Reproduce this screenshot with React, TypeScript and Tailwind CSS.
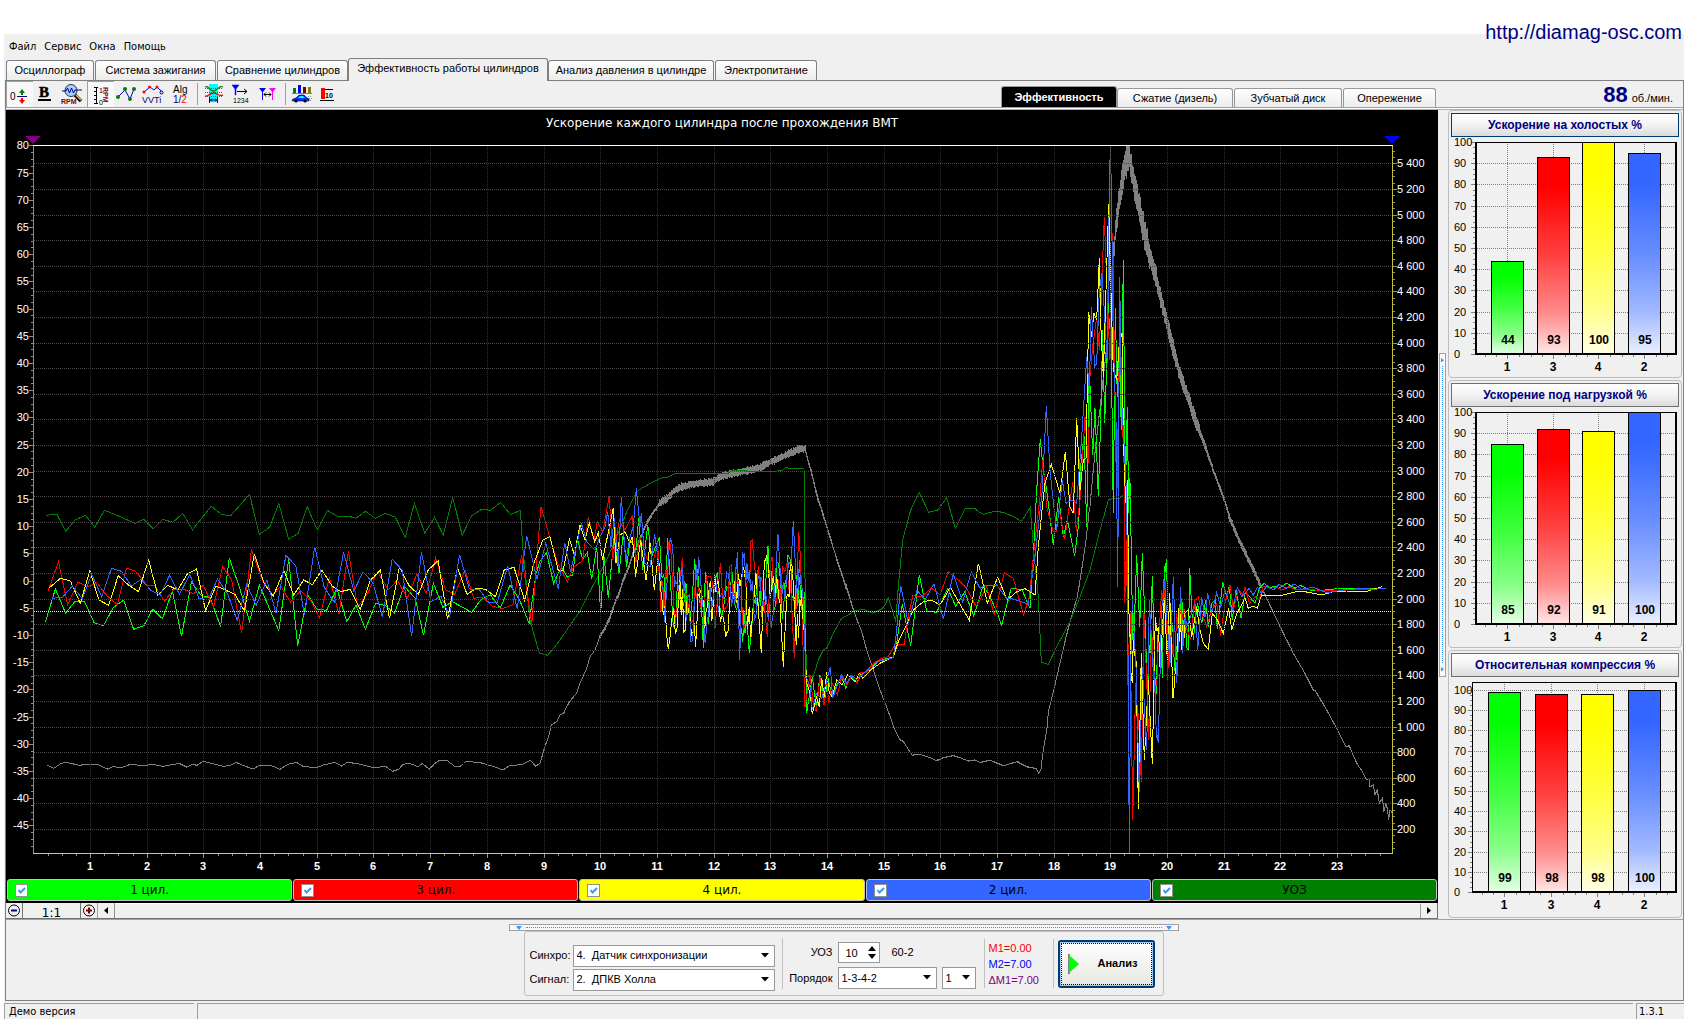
import React, { useState } from "react";

type Frame = [number, number, number, number];

/* Sampling frames: x origin, y origin, x scale, y scale */
const A: Frame = [0, 480, 2.529, 3];
const B: Frame = [580, 430, 3, 3];
const C: Frame = [980, 130, 3, 3];
const D: Frame = [980, 480, 3, 3];

type Part = [Frame, string];
type Pt = [number, number];

const toPoints = (parts: Part[]): Pt[] =>
  parts.flatMap(([f, s]) =>
    s
      .trim()
      .split(/\s+/)
      .map((p): Pt => {
        const [x, y] = p.split(",").map(Number);
        return [f[0] + x / f[2], f[1] + y / f[3]];
      })
  );

const random = (start: number) => {
  let seed = start;
  return () => {
    seed = (seed * 16807) % 2147483647;
    return seed / 2147483647;
  };
};

const isDense = (x: number) => (x > 655 && x < 802) || (x > 1128 && x < 1185);

/* A cylinder trace, with extra spikes where the engine runs fast */
const line = (parts: Part[], seed = 1) => {
  const pts = toPoints(parts);
  const next = random(seed * 7919);
  const out: Pt[] = [];
  pts.forEach(([x, y], i) => {
    out.push([x, y]);
    const after = pts[i + 1];
    if (after && seed > 1 && isDense(x) && Math.abs(after[1] - y) < 60) {
      const dx = after[0] - x;
      out.push([x + dx * 0.33, y * 0.6 + after[1] * 0.4 + (next() - 0.5) * 46]);
      out.push([x + dx * 0.66, y * 0.4 + after[1] * 0.6 + (next() - 0.5) * 46]);
    }
  });
  return out.map(([x, y]) => `${x.toFixed(1)},${y.toFixed(1)}`).join(" ");
};

/* A noisy trace: oscillates around the given centre line */
const noisy = (parts: Part[], amp: (t: number) => number) => {
  const pts = toPoints(parts);
  const next = random(7);
  const out: string[] = [];
  let sign = 1;
  for (let i = 0; i < pts.length - 1; i++) {
    const [x0, y0] = pts[i];
    const [x1, y1] = pts[i + 1];
    const n = Math.max(1, Math.ceil((x1 - x0) * 2));
    for (let k = 0; k < n; k++) {
      sign = -sign;
      const t = k / n;
      const x = x0 + (x1 - x0) * t;
      const y = y0 + (y1 - y0) * t + sign * amp(x) * (0.5 + 0.5 * next());
      out.push(`${x.toFixed(1)},${y.toFixed(1)}`);
    }
  }
  return out.join(" ");
};

const LIME: Part[] = [
  [A, "115,425 140,327 166,400 190,363 213,363 238,428 262,437 286,383 313,360 338,448 364,437 386,388 411,416 436,333 459,469 484,306 509,347 531,352 558,440 580,235 605,320 631,424 656,315 705,452 730,237 753,497 778,345 802,388 826,391 852,325 877,425 900,375 924,448 950,370 975,377 998,400 1022,318 1050,355 1071,466 1096,310 1120,382 1144,365 1193,397 1217,358 1240,344 1265,385 1290,315 1314,360 1338,430 1355,285 1365,245 1382,218 1400,310 1420,262 1435,292 1448,285 1460,172"],
  [B, "0,360 8,388 22,367 35,448 50,350 62,550 72,380 85,503 102,325 117,430 130,310 140,410 150,330 160,345 168,360 176,265 188,420 203,285 215,380 235,330 245,440 255,520 263,325 280,590 293,430 305,525 318,460 330,560 344,388 356,460 364,490 370,653 376,425 386,582 398,470 412,425 425,560 440,470 457,425 470,540 485,600 495,610 508,670 518,540 530,470 545,560 560,390 572,395 582,540 590,395 607,567 620,470 632,390 645,540 658,440 668,560 673,487 680,848 697,740 709,830 720,735 733,820 744,745 757,800 770,765 785,740 797,775 812,740 830,755 848,730 870,720 890,698 915,685 940,683 950,640 967,522 978,580 992,647 1003,560 1018,434 1040,543 1070,547 1103,475 1127,529 1154,485 1181,559"],
  [D, "10,315 30,350 50,395 65,436 93,326 125,328 150,385 160,230"],
  [C, "170,1080 181,928 190,1020 200,1080"],
  [D, "220,195 236,50 250,170 262,120 284,228 296,130"],
  [C, "303,1000 312,915 320,1190 328,715 338,975 345,835 355,1100 362,870 368,600 374,880 382,650 390,340 400,1150 406,535 412,800 418,640 424,900 430,390 434,900 437,1050 442,830 446,1150 451,1080"],
  [D, "455,300 460,520 470,225 479,440 487,220 495,420 502,620 510,520 517,288 527,670 535,440 547,593 553,258 562,330 568,520 575,420 583,560 593,480 603,370 612,420 625,510 629,265 640,480 652,370 665,430 677,360 685,440 695,370 705,360 712,448 728,306 740,350 748,318 757,420 768,330 783,415 795,340 810,350 825,370 838,325 853,310 870,325 880,318 895,325 920,310 945,325 960,316 990,330 1035,330 1070,326 1120,325 1190,327"],
];

const RED: Part[] = [
  [A, "122,332 148,245 171,374 197,307 222,320 245,308 270,347 297,374 320,265 343,274 372,316 392,318 416,363 440,328 465,328 490,341 514,316 540,382 563,259 586,300 611,460 636,208 661,295 690,345 710,318 735,367 760,332 785,360 808,415 833,292 857,403 881,214 905,382 930,340 955,275 982,330 1005,300 1030,355 1054,282 1078,340 1102,233 1127,330 1150,343 1176,270 1198,355 1220,352 1245,378 1270,386 1297,374 1319,226 1345,432 1368,80 1390,170 1410,250 1435,305 1450,262"],
  [B, "0,398 8,392 25,262 42,330 52,275 68,305 88,197 98,390 118,270 135,300 157,258 168,395 180,320 200,385 218,400 233,340 243,545 258,420 272,352 285,590 307,385 320,490 340,570 356,470 375,500 390,440 405,595 421,400 433,540 449,408 462,500 475,455 490,600 505,450 517,330 530,480 545,440 562,622 572,395 585,500 600,520 622,395 632,470 643,685 656,307 665,480 668,620 675,830 690,735 700,820 709,845 720,740 732,825 740,745 746,820 757,760 772,795 785,740 800,765 815,738 832,758 843,726 860,728 880,700 905,685 925,680 945,643 973,643 985,560 998,497 1025,500 1054,474 1080,495 1105,425 1135,450 1160,475 1188,529"],
  [D, "0,360 20,320 43,405 73,278 100,295 131,405 148,350 160,230"],
  [C, "180,1100 188,990 200,1130"],
  [D, "220,155 228,155 238,90 254,178 278,5 289,153 300,60"],
  [C, "315,860 325,1000 330,740 338,650 350,560 358,660 364,500 373,262 382,500 390,690 398,310 402,600 410,1130 420,550 428,900 434,1050"],
  [D, "434,370 440,180 443,615 450,400 458,1020 467,610 475,700 484,905 492,400 500,600 506,780 515,450 524,640 535,490 545,330 555,300 563,600 572,480 580,520 590,400 600,390 618,440 632,480 645,360 655,350 665,400 680,440 695,390 710,370 722,467 735,370 750,315 760,390 775,330 790,345 795,320 808,370 825,350 838,360 850,318 870,325 890,322 905,330 925,320 950,330 980,328 1030,332 1100,330 1190,328"],
];

const YELLOW: Part[] = [
  [A, "125,323 153,295 178,303 203,370 227,272 250,360 275,376 299,287 325,315 350,335 376,240 399,345 424,316 450,330 473,283 497,267 520,392 546,318 570,330 594,343 618,393 643,222 668,310 691,349 718,272 743,345 768,300 790,314 814,270 840,318 862,335 886,328 911,389 937,300 962,271 985,415 1010,262 1035,318 1058,343 1083,270 1108,242 1132,418 1157,262 1181,343 1205,325 1228,328 1253,350 1275,270 1300,262 1327,362 1350,250 1373,180 1391,170 1412,272 1424,272 1440,178 1453,225"],
  [B, "0,285 15,330 28,280 44,335 55,308 68,390 80,330 100,233 108,400 120,315 135,305 150,340 157,320 167,440 182,330 198,450 210,340 223,480 233,390 245,500 260,615 275,570 292,590 300,450 311,605 325,540 340,605 350,600 362,480 374,600 387,480 400,520 412,455 425,560 437,622 445,600 457,490 470,520 485,440 498,470 512,620 528,430 544,670 553,392 563,390 575,470 590,440 600,520 610,710 620,500 631,397 645,560 656,625 665,480 672,600 680,760 690,790 697,853 709,800 718,830 725,745 733,800 740,725 748,790 757,800 770,750 785,765 803,735 825,757 838,730 848,745 870,722 900,700 940,680 955,635 975,595 1000,540 1030,515 1055,511 1080,525 1111,472 1168,571 1195,401"],
  [D, "0,270 22,370 53,292 82,360 110,335 135,326 165,345 175,200 185,100"],
  [C, "195,1060 214,1003 240,1090 256,966 270,1130"],
  [D, "280,100"],
  [C, "290,865 300,1080 310,990 318,985 326,545 334,620 342,550 350,570 358,385 363,600 370,740 378,480 386,222 394,520 400,720 410,750 418,640 426,610 430,900 434,1050"],
  [D, "438,70 442,0 448,470 455,600 462,480 470,640 475,988 484,520 493,840 505,600 517,853 526,410 540,560 553,355 562,540 569,340 579,655 590,600 596,385 605,510 615,400 625,390 635,470 650,380 658,440 670,490 685,508 697,400 712,420 730,460 746,385 755,450 770,400 782,380 795,355 805,385 820,378 832,385 845,345 880,347 910,345 950,335 975,335 1025,345 1060,335 1100,333 1165,333 1205,320"],
];

const BLUE: Part[] = [
  [A, "132,355 158,352 183,318 208,356 232,283 257,350 282,265 307,274 332,318 357,298 382,332 405,345 429,286 454,343 480,283 503,355 529,353 550,297 575,340 600,422 624,313 648,376 675,300 698,400 723,226 748,257 770,405 796,200 820,322 845,367 869,217 895,334 918,275 943,308 967,411 992,238 1017,270 1041,469 1066,217 1090,365 1115,348 1137,410 1162,224 1187,327 1212,328 1236,367 1258,367 1284,257 1308,388 1332,167 1358,298 1380,190 1412,326 1428,188 1443,275"],
  [B, "0,300 5,283 20,335 45,360 60,320 75,290 83,245 93,350 103,265 115,410 124,200 137,395 150,320 160,290 169,175 180,290 184,250 195,400 210,410 224,313 240,430 254,575 267,360 280,380 290,460 307,410 318,560 325,500 335,635 345,500 356,382 368,520 376,640 390,470 405,470 420,500 435,480 450,465 465,520 472,365 479,690 488,367 497,470 508,420 523,572 540,440 555,480 570,520 580,550 594,313 605,500 620,440 640,274 650,490 658,390 668,480 678,740 690,770 697,840 709,790 725,805 740,755 751,710 758,805 770,770 785,735 800,760 815,736 830,748 845,735 860,722 890,695 940,683 950,600 962,467 985,580 1011,480 1035,510 1062,461 1090,568 1120,431 1148,515 1174,425"],
  [D, "0,325 15,316 50,315 80,355 100,357 145,373 165,230"],
  [C, "187,1080 199,828 210,1020 218,1100"],
  [D, "230,150"],
  [C, "247,1050 258,1120 275,1110 290,1120 305,920 320,680 328,780 334,532 344,710 350,700 358,480 366,430 374,560 382,700 388,190 391,48 394,166 400,640 408,870 413,1370 419,440 424,800 430,900"],
  [D, "440,50 445,630 448,1118 452,560 457,360 468,560 478,937 487,560 500,810 508,360 518,560 527,710 535,790 545,380 555,330 570,550 580,290 590,610 602,322 608,520 620,440 635,400 645,370 653,510 665,350 675,410 683,340 695,400 710,338 722,380 735,330 748,370 757,390 772,322 785,350 795,340 807,325 820,345 832,322 845,340 860,318 880,330 898,313 920,325 943,312 965,328 1000,322 1040,338 1090,330 1150,325 1180,328 1217,325"],
];

const ADVANCE: Part[] = [
  [A, "116,106 144,103 166,154 190,120 216,106 240,142 264,91 290,103 315,116 342,130 364,118 388,146 412,118 437,127 462,100 487,149 534,79 560,103 583,108 631,43 656,163 682,142 705,70 730,178 754,160 777,80 803,151 828,91 852,108 880,108 900,115 924,94 950,115 975,100 1000,112 1025,172 1048,70 1074,160 1099,112 1121,166 1145,52 1169,166 1193,107 1218,88 1241,91 1266,67 1291,104 1316,91 1322,200 1340,420 1364,519 1385,526 1400,505 1425,465 1445,430"],
  [B, "0,543 40,465 80,390 110,320 140,245 170,185 190,172 215,158 240,145 265,141 285,130 445,130 455,121 520,124 585,124 608,121 615,113 630,115 672,116 674,275 676,600 680,740 700,740 715,690 730,660 740,655 760,610 785,565 805,555 820,543 850,538 878,550 905,537 915,525 925,503 940,550 947,575 955,470 968,330 992,240 1018,188 1046,247 1073,240 1100,203 1126,295 1155,236 1185,236"],
  [D, "0,98 12,103 42,94 70,97 100,110 125,124 151,82 160,200 175,350 184,547 205,553 230,500 270,425 300,350 330,270 355,170 385,60 400,55 420,55 430,45"],
];

const SPEED: Part[] = [
  [A, "120,855 136,865 155,850 168,847 200,856 218,853 248,854 272,867 286,859 304,864 330,853 362,857 385,853 413,859 453,850 472,861 488,853 498,856 514,844 535,850 565,859 582,856 597,847 612,855 640,867 655,857 670,857 685,856 708,868 728,853 750,847 765,858 797,864 818,855 846,847 864,858 878,847 905,851 945,863 975,859 993,874 1008,868 1020,853 1035,850 1057,860 1068,850 1086,868 1100,850 1112,841 1130,841 1150,859 1165,858 1178,844 1215,848 1250,860 1272,870 1288,858 1320,853 1342,841 1355,859 1366,849 1378,800 1390,760 1394,735 1408,725 1416,705 1425,700 1440,665 1458,640"],
  [B, "0,760 20,715 30,680 45,660 60,620 75,595 90,565 105,520 120,485 130,450 145,415 160,370 175,340 195,290 210,260 230,235 240,220 260,205 280,185 300,172 350,160 400,155 420,140 450,133 500,122 540,112 580,93 620,73 650,60 675,55 680,75 690,110 700,150 712,200 725,240 740,290 760,355 780,415 800,475 820,540 845,605 860,660 880,720 900,780 925,845 945,900 958,927 970,935 996,975 1020,973 1050,983 1070,992 1090,983 1120,977 1140,983 1165,993 1185,990"],
  [D, "0,848 30,841 70,857 112,845 140,860 168,865 176,881 184,865 187,830 202,740 205,695 220,635 240,550 255,485 270,425 292,350 305,270 318,180 330,70"],
  [C, "345,960 360,830 375,690 390,560 400,380 410,270 420,200 430,130 440,90 446,72 452,100 465,170 480,240 500,340 525,430 560,580 600,730 650,880 700,1020 740,1130"],
  [D, "750,115 780,185 830,290 860,355 900,440 940,520 975,580 1000,630 1006,632 1040,690 1075,755 1097,800 1108,798 1130,850 1150,880 1160,900 1167,895 1170,920 1180,915 1185,945 1192,930 1198,968 1208,955 1211,998 1217,970 1222,985 1226,1020 1230,990 1237,1000"],
];

const speedNoise = (x: number) => {
  if (x < 600) return 0;
  if (x < 660) return 2.5;
  if (x < 807) return 4.5;
  if (x < 860) return 2;
  if (x < 1090) return 0.2;
  if (x < 1112) return 4;
  if (x < 1150) return 17;
  if (x < 1175) return 12;
  if (x < 1200) return 8;
  if (x < 1260) return 4;
  return 0.3;
};

const range = (a: number, b: number, step = 1) => {
  const r: number[] = [];
  for (let v = a; v <= b; v += step) r.push(v);
  return r;
};

const X = (u: number) => Math.round(33.4 + 56.68 * u);
const YL = (v: number) => Math.round(145.3 + (80 - v) * 5.44);
const YR = (v: number) => Math.round(854.6 - (v / 200) * 25.6);

const rpmLabel = (v: number) => (v >= 1000 ? `${Math.floor(v / 1000)} ${String(v % 1000).padStart(3, "0")}` : `${v}`);

function MainPlot() {
  return (
    <svg viewBox="6 110 1432 768" className="block w-full" role="img" aria-label="Ускорение каждого цилиндра после прохождения ВМТ">
      <text x="722" y="127" textAnchor="middle" fill="#fff" fontSize="12" fontFamily="'DejaVu Sans', sans-serif">
        Ускорение каждого цилиндра после прохождения ВМТ
      </text>
      <defs>
        <clipPath id="plotArea">
          <rect x="33" y="145" width="1360" height="709" />
        </clipPath>
      </defs>
      <g fill="none" shapeRendering="crispEdges" strokeWidth="1">
        <g clipPath="url(#plotArea)">
          <polyline points={noisy(SPEED, speedNoise)} stroke="#808080" />
          <polyline points={line(ADVANCE)} stroke="#008000" />
          <polyline points={line(LIME, 2)} stroke="#00ff00" />
          <polyline points={line(RED, 3)} stroke="#ff0000" />
          <polyline points={line(YELLOW, 4)} stroke="#ffff00" />
          <polyline points={line(BLUE, 5)} stroke="#3366ff" />
        </g>
        {range(200, 5400, 200).map((v) => (
          <line key={v} x1="34" x2="1392" y1={YR(v) + 0.5} y2={YR(v) + 0.5} stroke="#484848" strokeDasharray="1 1" />
        ))}
        {range(1, 23).map((v) => (
          <line key={v} x1={X(v) + 0.5} x2={X(v) + 0.5} y1="146" y2="853" stroke="#303030" strokeDasharray="1 1" />
        ))}
        <line x1="34" x2="1392" y1="611.5" y2="611.5" stroke="#a8ffff" strokeDasharray="1 1" />
        <line x1="33" x2="1393" y1="145.5" y2="145.5" stroke="#ffffff" />
        <line x1="33" x2="1393" y1="853.5" y2="853.5" stroke="#c0c0c0" />
        <line x1="33.5" x2="33.5" y1="146" y2="853" stroke="#40c040" />
        <line x1="1392.5" x2="1392.5" y1="146" y2="853" stroke="#c0c040" />
        <g stroke="#909090">
          {range(-45, 80, 5).map((v) => (
            <line key={v} x1="29" x2="33" y1={YL(v) + 0.5} y2={YL(v) + 0.5} />
          ))}
          {range(-48.75, 78.75, 1.25).map((v) => (
            <line key={v} x1="31" x2="33" y1={YL(v) + 0.5} y2={YL(v) + 0.5} />
          ))}
          {range(200, 5400, 200).map((v) => (
            <line key={v} x1="1393" x2="1397" y1={YR(v) + 0.5} y2={YR(v) + 0.5} />
          ))}
          {range(50, 5500, 50).map((v) => (
            <line key={v} x1="1393" x2="1395" y1={YR(v) + 0.5} y2={YR(v) + 0.5} />
          ))}
          {range(1, 23).map((v) => (
            <line key={v} x1={X(v) + 0.5} x2={X(v) + 0.5} y1="854" y2="858" />
          ))}
          {range(0.25, 23.75, 0.25).map((v) => (
            <line key={v} x1={X(v) + 0.5} x2={X(v) + 0.5} y1="854" y2="856" />
          ))}
        </g>
      </g>
      <path d="M25 136h16l-8 8z" fill="#800080" />
      <path d="M1384 136h16l-8 8z" fill="#0000ff" />
      <g fill="#fff" fontSize="11" fontFamily="'Liberation Sans', sans-serif">
        {range(-45, 80, 5).map((v) => (
          <text key={v} x="29" y={YL(v) + 4} textAnchor="end">
            {v}
          </text>
        ))}
        {range(200, 5400, 200).map((v) => (
          <text key={v} x="1397" y={YR(v) + 4}>
            {rpmLabel(v)}
          </text>
        ))}
        {range(1, 23).map((v) => (
          <text key={v} x={X(v)} y="870" textAnchor="middle" fontWeight="bold">
            {v}
          </text>
        ))}
      </g>
    </svg>
  );
}

interface BarSpec {
  label: string;
  value: number;
}

const BAR_COLORS = ["#00ff00", "#ff0000", "#ffff00", "#3366ff"];

function BarPanel({ title, bars, headroom, focused }: { title: string; bars: BarSpec[]; headroom?: boolean; focused?: boolean }) {
  const left = headroom ? 21 : 24;
  const bottom = headroom ? 216 : 218;
  const top = 6;
  const full = headroom ? 14 : 6;
  const scale = (bottom - full) / 100;
  const y = (v: number) => Math.round(bottom - v * scale);
  const xs = headroom ? [37, 84, 130, 177] : [40, 86, 131, 177];
  const id = title.replace(/[^а-яА-Я]/g, "");
  return (
    <section className="rounded-sm border border-[#bdbdbd] px-0.5 pt-0.5">
      <button
        type="button"
        className={
          "block h-6 w-full border bg-linear-to-b from-white via-[#f2f2f2] to-[#dcdcdc] font-['Liberation_Sans',sans-serif] text-xs leading-none font-bold text-[#000080] " +
          (focused ? "border-[#003c74]" : "border-[#707070]")
        }
      >
        {title}
      </button>
      <svg viewBox="0 1 228 240" className="block w-full" role="img" aria-label={title}>
        <defs>
          {BAR_COLORS.map((c, i) => (
            <linearGradient key={c} id={`${id}${i}`} x1="0" y1="0" x2="0" y2="1">
              <stop offset="0" stopColor={c} />
              <stop offset="0.15" stopColor={c} />
              <stop offset="0.5" stopColor={c} stopOpacity="0.75" />
              <stop offset="0.8" stopColor={c} stopOpacity="0.45" />
              <stop offset="1" stopColor={c} stopOpacity="0.1" />
            </linearGradient>
          ))}
        </defs>
        <g shapeRendering="crispEdges" fill="none">
          {range(10, headroom ? 100 : 90, 10).map((v) => (
            <line key={v} x1={left} x2="225" y1={y(v) + 0.5} y2={y(v) + 0.5} stroke="#808080" strokeDasharray="1 1" />
          ))}
          {range(0, 100, 10).map((v) => (
            <line key={v} x1={left - 4} x2={left} y1={y(v) + 0.5} y2={y(v) + 0.5} stroke="#808080" />
          ))}
          {range(2.5, 97.5, 2.5).map((v) => (
            <line key={v} x1={left - 2} x2={left} y1={y(v) + 0.5} y2={y(v) + 0.5} stroke="#808080" />
          ))}
          {xs.map((x, i) => (
            <g key={x} stroke="#808080">
              <line x1={x + 16.5} x2={x + 16.5} y1={top} y2={bottom} strokeDasharray="1 1" />
              <line x1={x + 16.5} x2={x + 16.5} y1={bottom} y2={bottom + 5} />
              <line x1={x + 5.5} x2={x + 5.5} y1={bottom} y2={bottom + 3} />
              <line x1={x + 28.5} x2={x + 28.5} y1={bottom} y2={bottom + 3} />
              <line x1={x - 5.5} x2={x - 5.5} y1={bottom} y2={bottom + 3} />
              {i === 3 && <line x1={x + 39.5} x2={x + 39.5} y1={bottom} y2={bottom + 3} />}
            </g>
          ))}
          <line x1={left} x2="226" y1={top + 0.5} y2={top + 0.5} stroke="#000" />
          <line x1="225" x2="225" y1={top} y2={bottom + 1} stroke="#000" strokeWidth="2" />
          <line x1={left} x2="226" y1={bottom} y2={bottom} stroke="#000" strokeWidth="2" />
          <line x1={left + 0.5} x2={left + 0.5} y1={top} y2={bottom + 1} stroke="#000" strokeWidth={headroom ? 1 : 2} />
          {bars.map((b, i) => (
            <g key={b.label}>
              <rect x={xs[i]} y={y(b.value)} width="33" height={bottom - y(b.value)} fill="#fff" />
              <rect
                x={xs[i] + 0.5}
                y={y(b.value) + 0.5}
                width="32"
                height={bottom - y(b.value) - 1}
                fill={`url(#${id}${i})`}
                stroke="#000"
              />
            </g>
          ))}
        </g>
        <g fontFamily="'Liberation Sans', sans-serif" fill="#000">
          {range(0, 100, 10).map((v) => (
            <text key={v} x="3" y={y(v) + 4} fontSize="11">
              {v}
            </text>
          ))}
          {bars.map((b, i) => (
            <g key={b.label} fontSize="12" fontWeight="bold" textAnchor="middle">
              <text x={xs[i] + 17} y={bottom - 10}>
                {b.value}
              </text>
              <text x={xs[i] + 16} y={bottom + 17}>
                {b.label}
              </text>
            </g>
          ))}
        </g>
      </svg>
    </section>
  );
}

function ToolButton({ label, pressed, children }: { label: string; pressed?: boolean; children: React.ReactNode }) {
  return (
    <button
      type="button"
      aria-label={label}
      aria-pressed={pressed}
      className={"flex h-[26px] w-[27px] items-center justify-start pl-px " + (pressed ? "border-t border-l border-[#a0a0a0] bg-[#f8f8f8]" : "")}
    >
      <svg viewBox="0 0 22 22" className="size-[22px] shrink-0" fontFamily="'Liberation Sans', sans-serif">
        {children}
      </svg>
    </button>
  );
}

function Separator() {
  return <span className="mr-1 ml-0.5 h-[22px] w-px bg-[#a0a0a0]" />;
}

function Toolbar() {
  return (
    <div className="flex items-center" role="toolbar" aria-label="Инструменты">
      <ToolButton label="Нулевая линия" pressed>
        <text x="2" y="16" fontSize="10">0</text>
        <path d="M9 12.5h10" stroke="#000080" shapeRendering="crispEdges" />
        <path d="M14 5l3 4h-2v2h-2V9h-2z" fill="#008000" />
        <path d="M14 20l3-4h-2v-2h-2v2h-2z" fill="#ff0000" />
      </ToolButton>
      <ToolButton label="Жирные линии">
        <text x="10" y="14" fontSize="15" fontWeight="bold" textAnchor="middle" fontFamily="'Liberation Serif', serif" stroke="#000" strokeWidth="0.5">B</text>
        <path d="M4 17h13" stroke="#000" strokeWidth="2" shapeRendering="crispEdges" />
      </ToolButton>
      <ToolButton label="Поиск по оборотам">
        <path d="M14 12l6 6" stroke="#000" strokeWidth="3.4" />
        <path d="M15 12l5 5" stroke="#f0b050" strokeWidth="1.6" />
        <circle cx="10" cy="7.500" r="6" fill="#a8d0ff" stroke="#203050" />
        <path d="M1 8h4l1.500-3 2 5 2-5 2 5 1.500-3h7" stroke="#000090" fill="none" />
        <text x="0" y="21" fontSize="7" fontWeight="bold" fill="#800000">RPM</text>
      </ToolButton>
      <ToolButton label="Шкала оборотов" pressed>
        <path d="M7.500 3v17M5 3.500h4M5 19.500h4M5 7.500h3M5 11.500h3M5 15.500h3" stroke="#000" fill="none" shapeRendering="crispEdges" />
        <text x="10" y="9" fontSize="7">1</text>
        <text x="10" y="21" fontSize="7">0</text>
        <text transform="translate(14 3) rotate(90)" fontSize="7" fontWeight="bold" fill="#800000">RPM</text>
      </ToolButton>
      <ToolButton label="Точки">
        <path d="M3 14L10 7l5 9 4-10" stroke="#0000d0" fill="none" />
        <g fill="#008000">
          <circle cx="3" cy="14" r="2" />
          <circle cx="10" cy="6" r="2" />
          <circle cx="15" cy="16" r="2" />
          <circle cx="19" cy="6" r="2" />
        </g>
      </ToolButton>
      <ToolButton label="VVTi">
        <path d="M2 9l6-5 4 3 3-3 4 4" stroke="#0000ff" fill="none" />
        <g fill="#ff0000">
          <circle cx="2" cy="9" r="1.500" />
          <circle cx="7.500" cy="4" r="1.500" />
          <circle cx="15" cy="4" r="1.500" />
        </g>
        <circle cx="19.500" cy="9.500" r="1.500" fill="none" stroke="#000" />
        <text x="0" y="20" fontSize="9" fill="#000080">VVTi</text>
      </ToolButton>
      <ToolButton label="Алгоритм 1/2">
        <text x="4" y="10" fontSize="10">Alg</text>
        <text x="4" y="20" fontSize="10" fill="#000080">1/<tspan fill="#ff0000">2</tspan></text>
      </ToolButton>
      <Separator />
      <ToolButton label="Интервал">
        <rect x="6" y="1" width="9" height="18" fill="#00ffff" />
        <path d="M2 5.500h18M2 13.500h18M2 9.500h18" stroke="#555" strokeDasharray="1 1" shapeRendering="crispEdges" />
        <path d="M2 4c4-2 4 4 8.500 4S15 2 20 4" stroke="#008000" fill="none" strokeWidth="1.300" />
        <path d="M2 13c4 1 4-3 8.500-3s5 4 9.500 2" stroke="#e00000" fill="none" strokeWidth="1.300" />
        <path d="M6.500 14v6M14.500 14v6M7 17h7M9 15.500L7.500 17 9 18.500M12 15.500l1.500 1.500-1.500 1.500" stroke="#000080" fill="none" />
      </ToolButton>
      <ToolButton label="Нумерация">
        <path d="M2 2h7L6 6v6H5V6z" fill="#0000ff" stroke="#0000ff" strokeWidth="0.500" />
        <path d="M7 8.500h10M14 6l3 2.500-3 2.500" stroke="#000" fill="none" />
        <text x="3" y="20" fontSize="7">1234</text>
      </ToolButton>
      <ToolButton label="Между маркерами">
        <path d="M2 5h7L6 9v8H5V9z" fill="#0000ff" />
        <path d="M12 5h7l-3 4v8h-1V9z" fill="#ff00ff" />
        <path d="M7 11.500h7M9 9.500l-2 2 2 2M12 9.500l2 2-2 2" stroke="#000" fill="none" />
      </ToolButton>
      <Separator />
      <ToolButton label="Отчёт по автомобилю">
        <g shapeRendering="crispEdges">
          <rect x="2" y="5" width="3" height="5" fill="#008000" />
          <rect x="7" y="2" width="3" height="8" fill="#0000ff" />
          <rect x="12" y="4" width="3" height="6" fill="#800000" />
          <rect x="17" y="4" width="3" height="6" fill="#808000" />
          <path d="M1 10.500h20" stroke="#808080" />
          <path d="M17 13.500h4M16 15.500h5M17 17.500h4" stroke="#909090" strokeDasharray="1 1" />
        </g>
        <path d="M2 16l3-1 3-3h5l3 3 2 1v2H1z" fill="#0030ff" stroke="#000040" strokeWidth="0.600" />
        <path d="M7 15l2-2h3l2 2z" fill="#00ffff" />
        <circle cx="5" cy="18" r="1.600" />
        <circle cx="14" cy="18" r="1.600" />
      </ToolButton>
      <ToolButton label="Столбцы">
        <rect x="3" y="5" width="4" height="11" fill="#ff0000" />
        <path d="M7 6.500h8M2 17.500h14" stroke="#000" shapeRendering="crispEdges" />
        <text x="7" y="15" fontSize="7" fontWeight="bold">10</text>
      </ToolButton>
    </div>
  );
}

const MAIN_TABS = [
  { label: "Осциллограф", cls: "w-[88px]" },
  { label: "Система зажигания", cls: "ml-px w-[121px]" },
  { label: "Сравнение цилиндров", cls: "ml-px w-[131px]" },
  { label: "Эффективность работы цилиндров", cls: "w-[200px]" },
  { label: "Анализ давления в цилиндре", cls: "w-[166px]" },
  { label: "Электропитание", cls: "ml-px w-[102px]" },
];

const VIEW_TABS = [
  { label: "Эффективность", cls: "w-[116px]" },
  { label: "Сжатие (дизель)", cls: "w-[116px]" },
  { label: "Зубчатый диск", cls: "ml-px w-[108px]" },
  { label: "Опережение", cls: "ml-px w-[93px]" },
];

const LEGEND = [
  { label: "1 цил.", cls: "bg-[#00ff00]" },
  { label: "3 цил.", cls: "bg-[#ff0000]" },
  { label: "4 цил.", cls: "bg-[#ffff00]" },
  { label: "2 цил.", cls: "bg-[#3366ff]" },
  { label: "УОЗ", cls: "bg-[#008000]" },
];

function DropDown({ id, value, cls, label }: { id: string; value: string; cls: string; label?: string }) {
  return (
    <div className={"relative h-[22px] " + cls}>
      <select id={id} aria-label={label} defaultValue={value} className="size-full appearance-none border border-[#989898] bg-white pl-[3px] text-[11px] leading-none">
        <option>{value}</option>
      </select>
      <svg viewBox="0 0 8 5" className="pointer-events-none absolute top-2 right-1.5 w-2">
        <path d="M0 0h8L4 4.500z" />
      </svg>
    </div>
  );
}

export default function App() {
  const [tab, setTab] = useState(3);
  const [view, setView] = useState(0);
  const [on, setOn] = useState([true, true, true, true, true]);
  return (
    <div className="relative bg-white pt-[34px] pr-3 pb-[5px] pl-1 font-['Liberation_Sans',sans-serif] text-[11px] leading-none text-black">
      <a href="http://diamag-osc.com" className="absolute top-[22px] right-3.5 text-xl leading-5 text-[#000080]">
        http://diamag-osc.com
      </a>
      <div className="bg-[#f0f0f0]">
        <nav className="flex h-6 items-center gap-2 pl-[5px] font-['DejaVu_Sans_Condensed','DejaVu_Sans',sans-serif] text-[11px]" aria-label="Меню">
          {["Файл", "Сервис", "Окна", "Помощь"].map((m) => (
            <button key={m} type="button">
              {m}
            </button>
          ))}
        </nav>
        <div className="flex h-[22px] items-end pl-0.5" role="tablist">
          {MAIN_TABS.map((t, i) => (
            <button
              key={t.label}
              type="button"
              role="tab"
              aria-selected={i === tab}
              onClick={() => setTab(i)}
              className={
                "rounded-t-[3px] border border-b-0 border-[#808080] whitespace-nowrap " +
                t.cls +
                (i === tab ? " relative -mb-px h-[23px] bg-[#f0f0f0] pb-1" : " h-5 bg-linear-to-b from-white to-[#ececec]")
              }
            >
              {t.label}
            </button>
          ))}
        </div>
        <div className="ml-px border border-[#808080]">
          <div className="flex h-[26px] justify-between">
            <Toolbar />
            <div className="flex">
              <div className="flex items-end" role="tablist">
                {VIEW_TABS.map((t, i) => (
                  <button
                    key={t.label}
                    type="button"
                    role="tab"
                    aria-selected={i === view}
                    onClick={() => setView(i)}
                    className={
                      "rounded-t-[3px] border border-b-0 border-[#989898] whitespace-nowrap " +
                      t.cls +
                      (i === view ? " h-[21px] bg-black font-bold text-white" : " h-[19px] bg-linear-to-b from-white to-[#ececec]")
                    }
                  >
                    {t.label}
                  </button>
                ))}
              </div>
              <p className="flex w-[247px] items-baseline justify-end gap-1 pt-1 pr-2.5">
                <span className="text-[22px] leading-5 font-bold text-[#000080]">88</span>
                <span>об./мин.</span>
              </p>
            </div>
          </div>
          <div className="h-[3px] border-t border-b border-t-[#a0a0a0] border-b-[#b0b0b0] bg-white" />

          <div className="flex items-start">
            <main className="min-w-0 flex-1">
              <div className="bg-black">
                <MainPlot />
                <div className="grid grid-cols-5 gap-px px-px pt-px pb-0.5 font-['DejaVu_Sans',sans-serif] text-xs">
                  {LEGEND.map((l, i) => (
                    <label key={l.label} className={"relative flex h-[22px] items-center justify-center rounded-[3px] border border-[#c0c0c0] " + l.cls}>
                      <input
                        type="checkbox"
                        checked={on[i]}
                        onChange={() => setOn(on.map((v, k) => (k === i ? !v : v)))}
                        className="peer absolute left-[7px] size-[13px] appearance-none border border-[#909090] bg-white"
                      />
                      <svg viewBox="0 0 13 13" className="pointer-events-none absolute left-[7px] hidden size-[13px] peer-checked:block">
                        <path d="M3.500 6l2 2.500 4.500-4.500" fill="none" stroke="#3399ff" strokeWidth="2" />
                      </svg>
                      {l.label}
                    </label>
                  ))}
                </div>
              </div>
              <div className="flex h-4 border-b border-[#707070]">
                <button type="button" aria-label="Уменьшить" className="w-[17px] border-r border-[#707070]">
                  <svg viewBox="0 0 16 15" className="w-4">
                    <circle cx="8" cy="7.500" r="5.500" fill="none" stroke="#000" />
                    <path d="M5 7.500h6" stroke="#000080" strokeWidth="2" />
                  </svg>
                </button>
                <span className="w-[58px] border-r border-[#707070] pt-1 text-center font-['DejaVu_Sans',sans-serif] text-xs leading-none">1:1</span>
                <button type="button" aria-label="Увеличить" className="w-[17px] border-r border-[#a0a0a0]">
                  <svg viewBox="0 0 16 15" className="w-4">
                    <circle cx="8" cy="7.500" r="5.500" fill="none" stroke="#000" />
                    <path d="M5 7.500h6M8 4.500v6" stroke="#800000" strokeWidth="2" />
                  </svg>
                </button>
                <button type="button" aria-label="Влево" className="flex w-[17px] items-center justify-center border-r border-[#909090]">
                  <svg viewBox="0 0 4 7" className="h-[7px] w-1">
                    <path d="M4 0v7L0 3.500z" />
                  </svg>
                </button>
                <div className="flex-1 border-t border-r border-[#a0a0a0] border-t-white" />
                <button type="button" aria-label="Вправо" className="flex w-[17px] items-center justify-center border-r border-[#707070]">
                  <svg viewBox="0 0 4 7" className="h-[7px] w-1">
                    <path d="M0 0v7l4-3.500z" />
                  </svg>
                </button>
              </div>
            </main>
            <div className="flex w-2.5 justify-start self-stretch pl-px">
              <button type="button" aria-label="Свернуть панель" className="flex h-[324px] w-[7px] flex-col items-center justify-between self-center border border-[#a0a0a0] bg-[#f8f8f8] py-1">
                <svg viewBox="0 0 4 6" className="w-[3px]"><path d="M0 0v6l4-3z" fill="#3399ff" /></svg>
                <span className="my-1 flex-1 border-l border-dotted border-[#3399ff]" />
                <svg viewBox="0 0 4 6" className="w-[3px]"><path d="M0 0v6l4-3z" fill="#3399ff" /></svg>
              </button>
            </div>
            <aside className="flex w-[235px] flex-col gap-0.5 pr-px">
              <BarPanel
                focused
                title="Ускорение на холостых %"
                bars={[
                  { label: "1", value: 44 },
                  { label: "3", value: 93 },
                  { label: "4", value: 100 },
                  { label: "2", value: 95 },
                ]}
              />
              <BarPanel
                title="Ускорение под нагрузкой %"
                bars={[
                  { label: "1", value: 85 },
                  { label: "3", value: 92 },
                  { label: "4", value: 91 },
                  { label: "2", value: 100 },
                ]}
              />
              <BarPanel
                headroom
                title="Относительная компрессия %"
                bars={[
                  { label: "1", value: 99 },
                  { label: "3", value: 98 },
                  { label: "4", value: 98 },
                  { label: "2", value: 100 },
                ]}
              />
            </aside>
          </div>
          <div className="h-px bg-[#a0a0a0]" />
          <div className="flex flex-col items-center pt-1 pr-0.5 pb-1">
            <button type="button" aria-label="Свернуть настройки" className="flex h-[7px] w-[670px] items-center justify-between border border-[#a0a0a0] bg-[#f8f8f8] px-1.5">
              <svg viewBox="0 0 6 4" className="w-1.5"><path d="M0 0h6L3 4z" fill="#3399ff" /></svg>
              <span className="mx-1 flex-1 border-t border-dotted border-[#3399ff]" />
              <svg viewBox="0 0 6 4" className="w-1.5"><path d="M0 0h6L3 4z" fill="#3399ff" /></svg>
            </button>
            <form className="flex h-[65px] w-[640px] items-center rounded-[3px] border border-[#c0c0c0]" onSubmit={(e) => e.preventDefault()}>
              <div className="grid w-[257px] grid-cols-[42px_203px] items-center gap-x-px gap-y-0.5 pt-2 pl-[5px]">
                <label htmlFor="sync">Синхро:</label>
                <DropDown id="sync" value={"4.\u00a0 Датчик синхронизации"} cls="w-[202px]" />
                <label htmlFor="signal">Сигнал:</label>
                <DropDown id="signal" value={"2.\u00a0 ДПКВ Холла"} cls="w-[202px]" />
              </div>
              <div className="h-[51px] w-px bg-[#c0c0c0]" />
              <div className="grid w-[201px] grid-cols-[50px_99px_34px] items-center gap-x-[5px] gap-y-1 pt-1">
                <label htmlFor="angle" className="text-right">УОЗ</label>
                <div className="flex items-center gap-3">
                  <div className="relative h-[21px] w-[42px]">
                    <input id="angle" defaultValue="10" className="size-full border border-[#989898] bg-white pl-[7px] text-[11px]" />
                    <button type="button" aria-label="Больше" className="absolute top-1 right-1 w-2">
                      <svg viewBox="0 0 8 5" className="w-2"><path d="M0 5h8L4 0z" /></svg>
                    </button>
                    <button type="button" aria-label="Меньше" className="absolute right-1 bottom-1 w-2">
                      <svg viewBox="0 0 8 5" className="w-2"><path d="M0 0h8L4 5z" /></svg>
                    </button>
                  </div>
                  <span>60-2</span>
                </div>
                <span />
                <label htmlFor="order" className="text-right">Порядок</label>
                <DropDown id="order" value="1-3-4-2" cls="w-[99px]" />
                <DropDown id="first" value="1" cls="w-[34px]" label="Первый цилиндр" />
              </div>
              <div className="h-[49px] w-px bg-[#c0c0c0]" />
              <div className="flex w-[68px] flex-col gap-[5px] pt-px pl-1">
                <span className="text-[#ff0000]">M1=0.00</span>
                <span className="text-[#0000ff]">M2=7.00</span>
                <span className="text-[#800080]">ΔM1=7.00</span>
              </div>
              <div className="h-[49px] w-px bg-[#c0c0c0]" />
              <button
                type="submit"
                className="ml-1 flex h-12 w-[97px] items-center rounded-[3px] border-2 border-[#003c74] bg-linear-to-b from-white to-[#e6e8e0] p-px font-bold outline-1 -outline-offset-3 outline-[#a8c8f0]"
              >
                <span className="flex size-full items-center border border-dotted border-black pl-1.5">
                  <svg viewBox="0 0 11 20" className="h-5 w-[11px]">
                    <path d="M1 0v20" stroke="#808080" strokeWidth="2" />
                    <path d="M1 1l10 9L1 19z" fill="#00ff00" />
                  </svg>
                  <span className="flex-1 pl-1.5 text-center">Анализ</span>
                </span>
              </button>
            </form>
          </div>
        </div>
        <footer className="mt-0.5 flex h-4 gap-[3px] font-['DejaVu_Sans_Condensed','DejaVu_Sans',sans-serif] text-[11px]">
          <span className="w-[190px] border-t border-l border-[#a0a0a0] pt-0.5 pl-1">Демо версия</span>
          <span className="flex-1 border-t border-l border-[#a0a0a0]" />
          <span className="w-12 border-t border-l border-[#a0a0a0] pt-0.5 pl-0.5">1.3.1</span>
        </footer>
      </div>
    </div>
  );
}
